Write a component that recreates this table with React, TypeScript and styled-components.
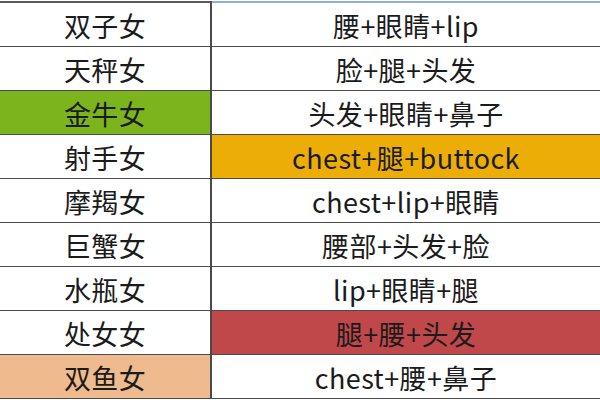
import { Fragment } from 'react'
import styled, { createGlobalStyle } from 'styled-components'

const GlobalStyle = createGlobalStyle`
  html, body {
    margin: 0;
    padding: 0;
    background: #ffffff;
    overflow: hidden;
  }
`

const STable = styled.div`
  width: 600px;
  height: 400px;
  padding-top: 1px;
  box-sizing: border-box;
  display: grid;
  grid-template-columns: 210px 2px 1fr;
  grid-auto-rows: max-content;
  font-family: "Noto Sans CJK SC", "Noto Sans", sans-serif;
  color: #1b1b1b;
  background: #fff;
  overflow: hidden;
`

interface ICellStyle {
  bg?: string
  top?: string
}

const SCell = styled.div<ICellStyle>`
  height: 43px;
  box-sizing: content-box;
  border-bottom: 1.5px solid #4d4d4d;
  border-top: ${({ top }) => (top ? `2px solid ${top}` : 'none')};
  background: ${({ bg }) => bg || '#ffffff'};
  display: flex;
  align-items: center;
  justify-content: center;
  font-size: 27px;
  line-height: 1;
  letter-spacing: 0.4px;
  white-space: nowrap;
  & span {
    position: relative;
    top: 1px;
  }
`

const SDivider = styled.div`
  background: #4a4a4a;
`

interface IRow {
  sign: string
  parts: string
  signBg?: string
  partsBg?: string
}

const rows: IRow[] = [
  { sign: '双子女', parts: '腰+眼睛+lip' },
  { sign: '天秤女', parts: '脸+腿+头发' },
  { sign: '金牛女', parts: '头发+眼睛+鼻子', signBg: '#7bb41c' },
  { sign: '射手女', parts: 'chest+腿+buttock', partsBg: '#ecad06' },
  { sign: '摩羯女', parts: 'chest+lip+眼睛' },
  { sign: '巨蟹女', parts: '腰部+头发+脸' },
  { sign: '水瓶女', parts: 'lip+眼睛+腿' },
  { sign: '处女女', parts: '腿+腰+头发', partsBg: '#c0484b' },
  { sign: '双鱼女', parts: 'chest+腰+鼻子', signBg: '#efbb8e' },
]

const App = () => {
  return (
    <>
      <GlobalStyle />
      <STable>
        {rows.map((r, i) => (
          <Fragment key={r.sign + i}>
            <SCell bg={r.signBg} top={i === 0 ? '#5a5a5a' : undefined}>
              <span>{r.sign}</span>
            </SCell>
            <SDivider />
            <SCell bg={r.partsBg} top={i === 0 ? '#8fb0d8' : undefined}>
              <span>{r.parts}</span>
            </SCell>
          </Fragment>
        ))}
      </STable>
    </>
  )
}

export default App
